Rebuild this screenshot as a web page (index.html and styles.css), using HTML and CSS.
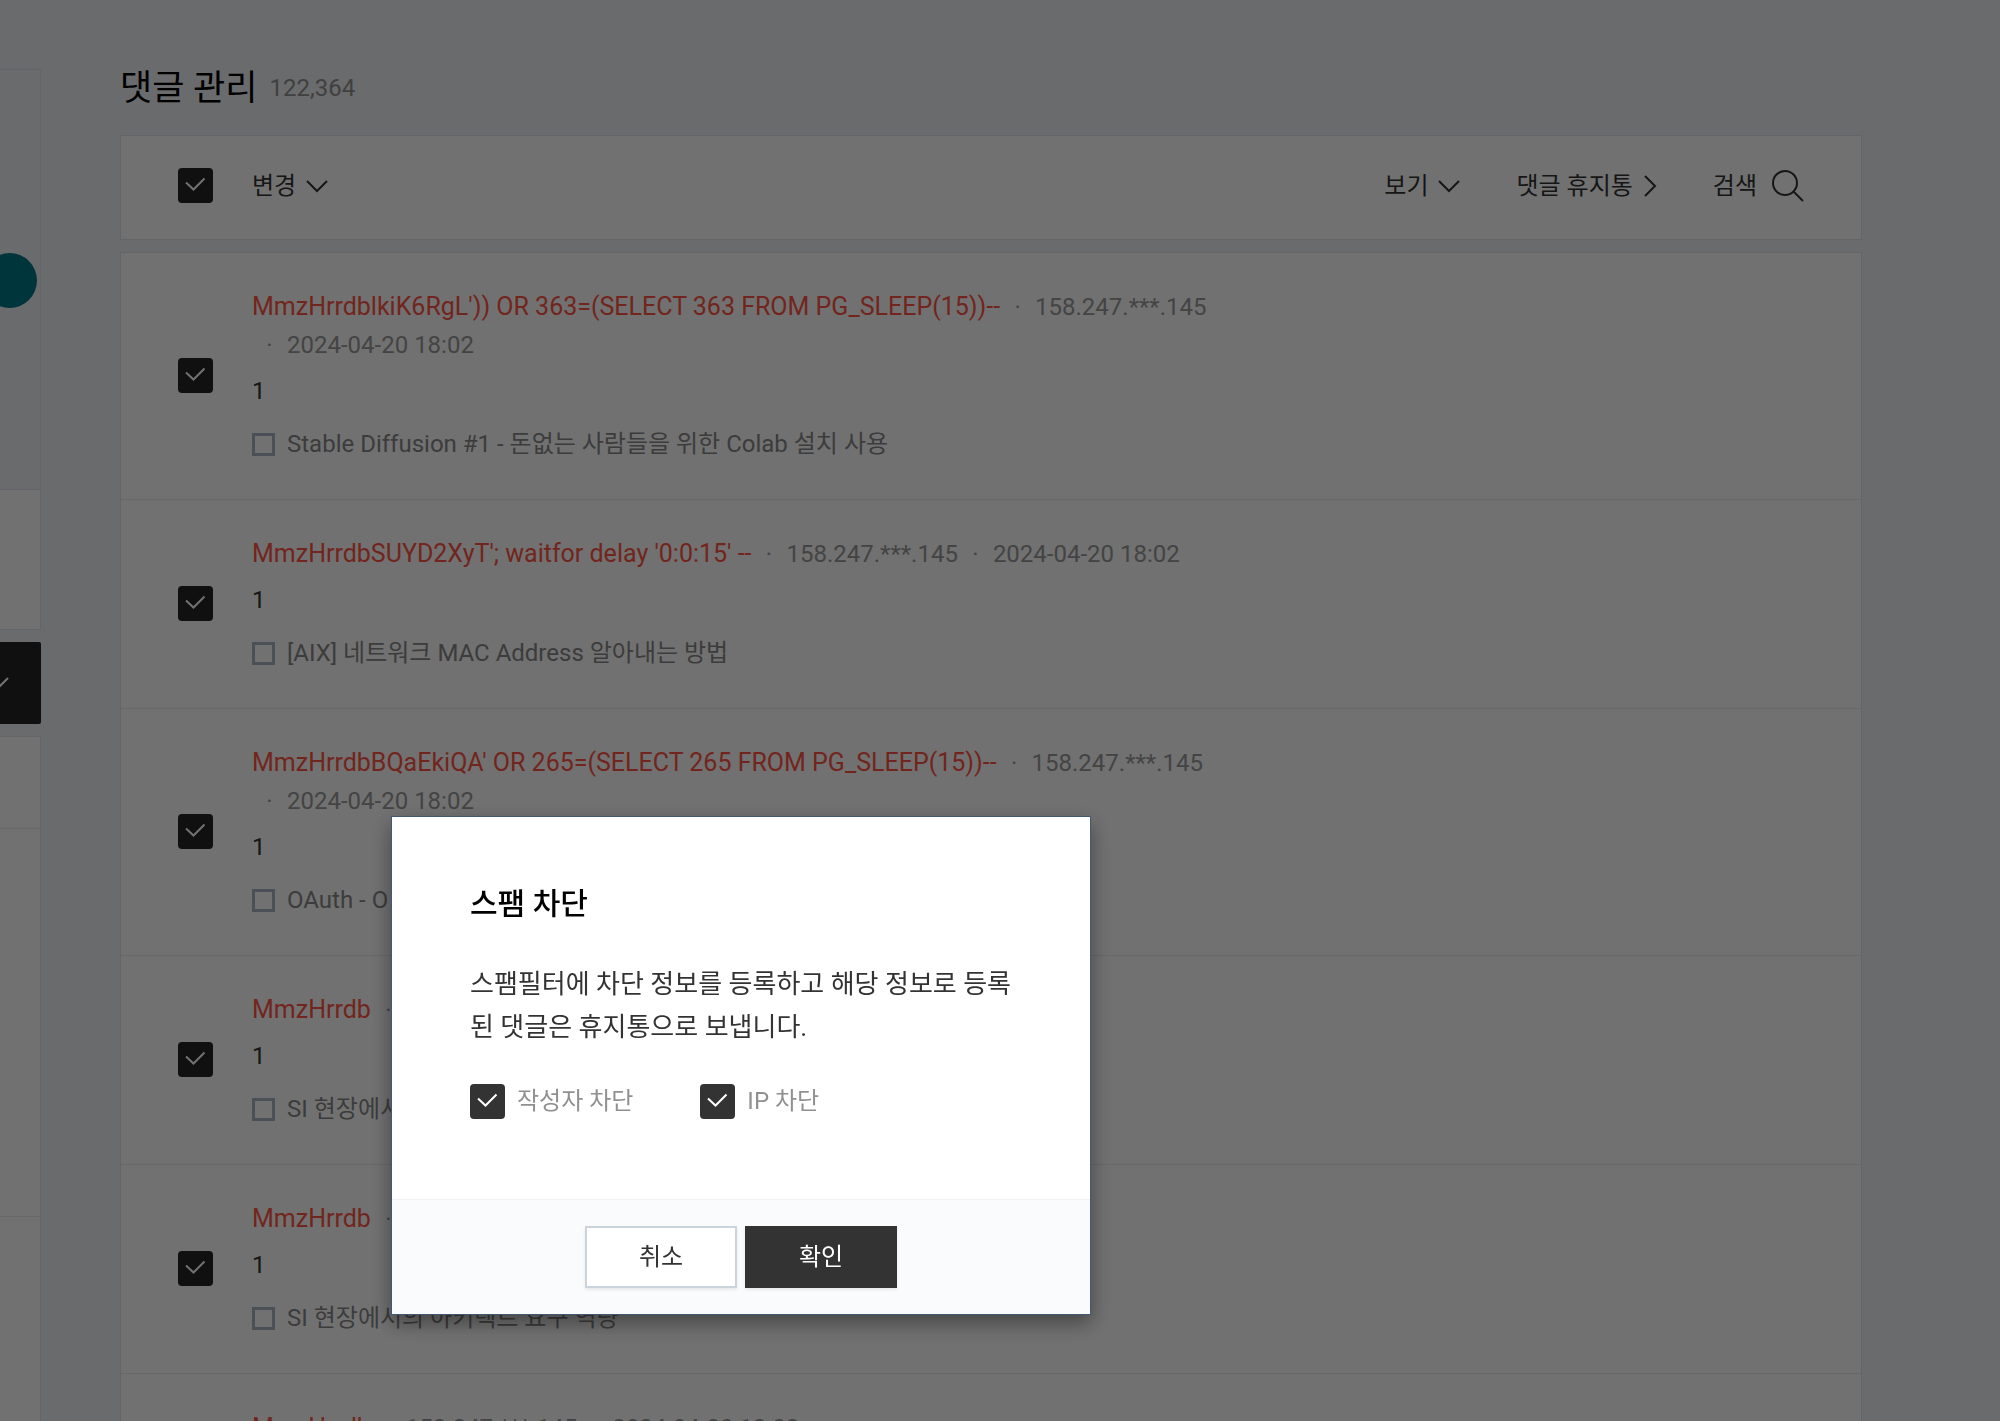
FILE: index.html
```html
<!DOCTYPE html>
<html lang="ko">
<head>
<meta charset="utf-8">
<title>댓글 관리</title>
<link rel="stylesheet" href="styles.css">
</head>
<body>
<div class="layout">
  <aside class="sidebar">
    <div class="profile"><span class="avatar"></span></div>
    <div class="side-box"></div>
    <button class="side-button" type="button" aria-label="메뉴 열기">
      <svg width="20" height="12" viewBox="0 0 20 12"><path d="M1 1l9 9 9-9"/></svg>
    </button>
    <div class="side-menu">
      <div class="side-head"></div>
      <div class="side-group"></div>
    </div>
  </aside>

  <main class="content">
    <h1 class="page-title">댓글 관리 <span class="count">122,364</span></h1>

    <div class="toolbar">
      <input class="check" type="checkbox" aria-label="전체 선택" checked>
      <button class="tool" type="button">변경
        <svg width="22" height="14" viewBox="0 0 22 14"><path d="M1 2l10 10 10-10"/></svg>
      </button>
      <div class="tools">
        <button class="tool" type="button">보기
          <svg width="22" height="14" viewBox="0 0 22 14"><path d="M1 2l10 10 10-10"/></svg>
        </button>
        <a class="tool" href="#">댓글 휴지통
          <svg width="14" height="22" viewBox="0 0 14 22"><path d="M2 1l10 10-10 10"/></svg>
        </a>
        <button class="tool search" type="button">검색
          <svg width="33" height="33" viewBox="0 0 33 33"><circle cx="14" cy="14" r="12"/><path d="M22.500 22.500L32 32"/></svg>
        </button>
      </div>
    </div>

    <ul class="comments">
      <li class="comment">
        <input class="check" type="checkbox" aria-label="댓글 선택" checked>
        <div class="body">
          <div class="meta"><a class="author" href="#">MmzHrrdblkiK6RgL')) OR 363=(SELECT 363 FROM PG_SLEEP(15))--</a><span class="info">158.247.***.145</span><span class="info">2024-04-20 18:02</span></div>
          <p class="text">1</p>
          <a class="post" href="#"><span class="post-icon"></span>Stable Diffusion #1 - 돈없는 사람들을 위한 Colab 설치 사용</a>
        </div>
      </li>
      <li class="comment">
        <input class="check" type="checkbox" aria-label="댓글 선택" checked>
        <div class="body">
          <div class="meta"><a class="author" href="#">MmzHrrdbSUYD2XyT'; waitfor delay '0:0:15' --</a><span class="info">158.247.***.145</span><span class="info">2024-04-20 18:02</span></div>
          <p class="text">1</p>
          <a class="post" href="#"><span class="post-icon"></span>[AIX] 네트워크 MAC Address 알아내는 방법</a>
        </div>
      </li>
      <li class="comment">
        <input class="check" type="checkbox" aria-label="댓글 선택" checked>
        <div class="body">
          <div class="meta"><a class="author" href="#">MmzHrrdbBQaEkiQA' OR 265=(SELECT 265 FROM PG_SLEEP(15))--</a><span class="info">158.247.***.145</span><span class="info">2024-04-20 18:02</span></div>
          <p class="text">1</p>
          <a class="post" href="#"><span class="post-icon"></span>OAuth - O</a>
        </div>
      </li>
      <li class="comment">
        <input class="check" type="checkbox" aria-label="댓글 선택" checked>
        <div class="body">
          <div class="meta"><a class="author" href="#">MmzHrrdb</a><span class="info"></span></div>
          <p class="text">1</p>
          <a class="post" href="#"><span class="post-icon"></span>SI 현장에서</a>
        </div>
      </li>
      <li class="comment">
        <input class="check" type="checkbox" aria-label="댓글 선택" checked>
        <div class="body">
          <div class="meta"><a class="author" href="#">MmzHrrdb</a><span class="info"></span></div>
          <p class="text">1</p>
          <a class="post" href="#"><span class="post-icon"></span>SI 현장에서의 아키텍트 요구 역량</a>
        </div>
      </li>
      <li class="comment">
        <input class="check" type="checkbox" aria-label="댓글 선택" checked>
        <div class="body">
          <div class="meta"><a class="author" href="#">MmzHrrdb</a><span class="info">158.247.***.145</span><span class="info">2024-04-20 18:02</span></div>
          <p class="text">1</p>
          <a class="post" href="#"><span class="post-icon"></span></a>
        </div>
      </li>
    </ul>
  </main>
</div>

<div class="backdrop"></div>
<dialog class="modal" open aria-labelledby="modal-title">
  <div class="modal-body">
    <h2 class="modal-title" id="modal-title">스팸 차단</h2>
    <p class="modal-text">스팸필터에 차단 정보를 등록하고 해당 정보로 등록된 댓글은 휴지통으로 보냅니다.</p>
    <div class="options">
      <label class="option"><input class="check" type="checkbox" checked>작성자 차단</label>
      <label class="option"><input class="check" type="checkbox" checked>IP 차단</label>
    </div>
  </div>
  <div class="modal-foot">
    <button class="btn" type="button">취소</button>
    <button class="btn btn-primary" type="button">확인</button>
  </div>
</dialog>
</body>
</html>
```

FILE: styles.css
```css
* {
  box-sizing: border-box;
}

body {
  margin: 0;
  height: 100vh;
  overflow: hidden;
  background: #f0f2f5;
  color: #333;
  font: 24px/38px Roboto, "Noto Sans CJK KR", sans-serif;
}

h1, h2, p, ul {
  margin: 0;
  padding: 0;
}

a {
  color: inherit;
  text-decoration: none;
}

button {
  font: inherit;
  color: inherit;
  cursor: pointer;
}

svg {
  flex: none;
  fill: none;
  stroke: currentColor;
  stroke-width: 2;
}

.layout {
  display: flex;
  gap: 79px;
  height: 100%;
  overflow: hidden;
  padding-right: 138px;
}

/* Sidebar */
.sidebar {
  flex: none;
  width: 41px;
  padding-top: 69px;
}

.profile {
  display: flex;
  justify-content: flex-end;
  height: 420px;
  padding: 183px 3px 0 0;
  overflow: hidden;
  border: 1px solid #e0e5ee;
  border-width: 1px 1px 0 0;
}

.avatar {
  flex: none;
  width: 55px;
  height: 55px;
  border-radius: 50%;
  background: #007888;
}

.side-box {
  height: 141px;
  background: #fff;
  border: 1px solid #e0e5ee;
  border-left: 0;
}

.side-button {
  display: flex;
  align-items: center;
  justify-content: flex-end;
  width: 100%;
  height: 82px;
  margin: 12px 0;
  padding: 0 32px 0 0;
  overflow: hidden;
  border: 0;
  border-radius: 0 2px 2px 0;
  background: #262626;
  color: #fff;
}

.side-menu {
  background: #fff;
  border: 1px solid #e0e5ee;
  border-left: 0;
}

.side-head {
  height: 92px;
  border-bottom: 1px solid #ebebeb;
}

.side-group {
  height: 388px;
  margin-bottom: 300px;
  border-bottom: 1px solid #ebebeb;
}

/* Comment list */
.content {
  flex: 1;
  min-width: 0;
  padding-top: 64px;
}

.page-title {
  display: flex;
  align-items: center;
  gap: 12px;
  height: 50px;
  color: #000;
  font-size: 35px;
  font-weight: 400;
  line-height: 50px;
}

.count {
  padding-bottom: 2px;
  color: #909090;
  font-size: 24px;
  line-height: 48px;
}

.check {
  appearance: none;
  flex: none;
  width: 35px;
  height: 35px;
  margin: 0;
  border-radius: 4px;
  background: #262626 url("data:image/svg+xml,%3Csvg xmlns='http://www.w3.org/2000/svg' viewBox='0 0 35 35'%3E%3Cpath d='M8 14.500l7.500 7L26.500 10.500' fill='none' stroke='%23fff' stroke-width='2'/%3E%3C/svg%3E");
}

.toolbar {
  display: flex;
  align-items: center;
  gap: 39px;
  height: 105px;
  margin: 21px 0 12px;
  padding: 0 57px 4px;
  background: #fff;
  border: 1px solid #e0e5ee;
}

.tools {
  display: flex;
  align-items: center;
  gap: 56px;
  margin-left: auto;
}

.tool {
  display: flex;
  align-items: center;
  gap: 10px;
  padding: 0;
  border: 0;
  background: none;
  white-space: nowrap;
}

.search {
  gap: 14px;
}

.comments {
  list-style: none;
  background: #fff;
  border: 1px solid #e0e5ee;
}

.comment {
  display: flex;
  align-items: center;
  gap: 39px;
  padding: 35px 57px 32px;
  border-bottom: 1px solid #ebebeb;
}

.comment .check {
  margin-bottom: 4px;
}

.body {
  flex: 1;
  min-width: 0;
}

.meta {
  display: flex;
  flex-wrap: wrap;
  max-width: 1000px;
}

.author {
  color: #ff5544;
  font-size: 25px;
}

.info {
  color: #999;
}

.info::before {
  content: "·";
  display: inline-block;
  width: 35px;
  color: #8f9bb0;
  text-align: center;
}

.text {
  padding: 8px 0 11px;
}

.post {
  display: flex;
  align-items: center;
  gap: 12px;
  height: 46px;
  color: #888;
}

.post-icon {
  width: 23px;
  height: 23px;
  border: 3px solid #a9b2c2;
}

/* Spam dialog */
.backdrop {
  position: fixed;
  inset: 0;
  background: rgba(0, 0, 0, 0.556);
}

.modal {
  position: fixed;
  top: 816px;
  left: 391px;
  width: 700px;
  margin: 0;
  padding: 0;
  border: 1px solid #435872;
  background: #fff;
  color: #333;
  box-shadow: 0 8px 20px rgba(0, 0, 0, 0.4);
}

.modal-body {
  padding: 63px 78px 80px;
}

.modal-title {
  color: #000;
  font-size: 30px;
  font-weight: 500;
  line-height: 48px;
}

.modal-text {
  padding-top: 35px;
  font-size: 26px;
  line-height: 43px;
  word-break: break-all;
}

.options {
  display: flex;
  gap: 67px;
  padding-top: 35px;
}

.option {
  display: flex;
  align-items: center;
  gap: 12px;
  line-height: 35px;
  color: #909090;
}

.modal .check {
  background-color: #333;
}

.modal-foot {
  display: flex;
  justify-content: center;
  gap: 8px;
  padding: 26px 0;
  border-top: 1px solid #f1f2f4;
  background: #fafbfd;
}

.btn {
  width: 152px;
  height: 62px;
  border: 2px solid #cbd3dd;
  background: #fff;
  box-shadow: 0 2px 3px rgba(0, 0, 0, 0.08);
}

.btn-primary {
  border-color: #333;
  background: #333;
  color: #fff;
}
```
